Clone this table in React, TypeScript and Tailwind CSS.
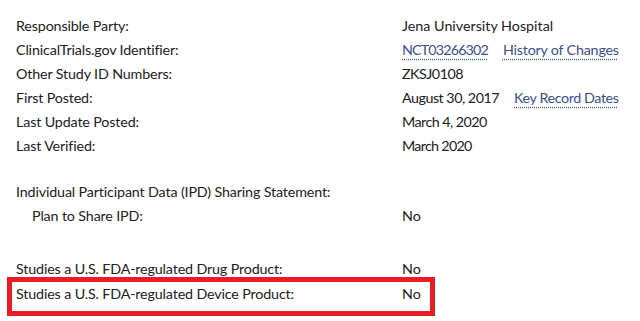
import React from "react";

type Cell = { text: string; link?: boolean; tight?: string };

function Value({ items }: { items: Cell[] }) {
  return (
    <div className="flex items-center gap-[15px] whitespace-nowrap">
      {items.map((c, i) =>
        c.link ? (
          <a
            key={i}
            href="#"
            className={`text-[#3a4f8c] underline decoration-dotted decoration-[#4a5f9c] underline-offset-[4px] ${c.tight ?? ""}`}
          >
            {c.text}
          </a>
        ) : (
          <span key={i} className={c.tight ?? ""}>
            {c.text}
          </span>
        )
      )}
    </div>
  );
}

function Row({ label, items, indent }: { label: string; items?: Cell[]; indent?: boolean }) {
  return (
    <div className="flex h-6 items-center whitespace-nowrap">
      <div className={`w-[386px] shrink-0 tracking-[-0.15px] ${indent ? "pl-4" : ""}`}>{label}</div>
      {items ? <Value items={items} /> : null}
    </div>
  );
}

export default function App() {
  return (
    <div
      className="h-[321px] w-[640px] overflow-hidden bg-white pl-4 pt-[14px] text-[14.3px] text-[#212121]"
      style={{ fontFamily: "Lato, 'Open Sans', sans-serif" }}
    >
      <Row label="Responsible Party:" items={[{ text: "Jena University Hospital" }]} />
      <Row
        label="ClinicalTrials.gov Identifier:"
        items={[
          { text: "NCT03266302", link: true, tight: "tracking-[-0.85px]" },
          { text: "History of Changes", link: true, tight: "tracking-[-0.2px]" },
        ]}
      />
      <Row label="Other Study ID Numbers:" items={[{ text: "ZKSJ0108", tight: "tracking-[-0.5px]" }]} />
      <Row
        label="First Posted:"
        items={[
          { text: "August 30, 2017", tight: "tracking-[-0.5px]" },
          { text: "Key Record Dates", link: true, tight: "tracking-[-0.4px]" },
        ]}
      />
      <Row label="Last Update Posted:" items={[{ text: "March 4, 2020", tight: "tracking-[-0.55px]" }]} />
      <Row label="Last Verified:" items={[{ text: "March 2020", tight: "tracking-[-0.7px]" }]} />

      <div className="mt-[22px]">
        <Row label="Individual Participant Data (IPD) Sharing Statement:" />
        <Row label="Plan to Share IPD:" items={[{ text: "No" }]} indent />
      </div>

      <div className="mt-[29px]">
        <Row label="Studies a U.S. FDA-regulated Drug Product:" items={[{ text: "No" }]} />
        <div className="-ml-[9px] -mt-[4px] w-[428px] border-[5px] border-[#ec1c24] pb-[5px] pl-[4px]">
          <Row label="Studies a U.S. FDA-regulated Device Product:" items={[{ text: "No" }]} />
        </div>
      </div>
    </div>
  );
}
